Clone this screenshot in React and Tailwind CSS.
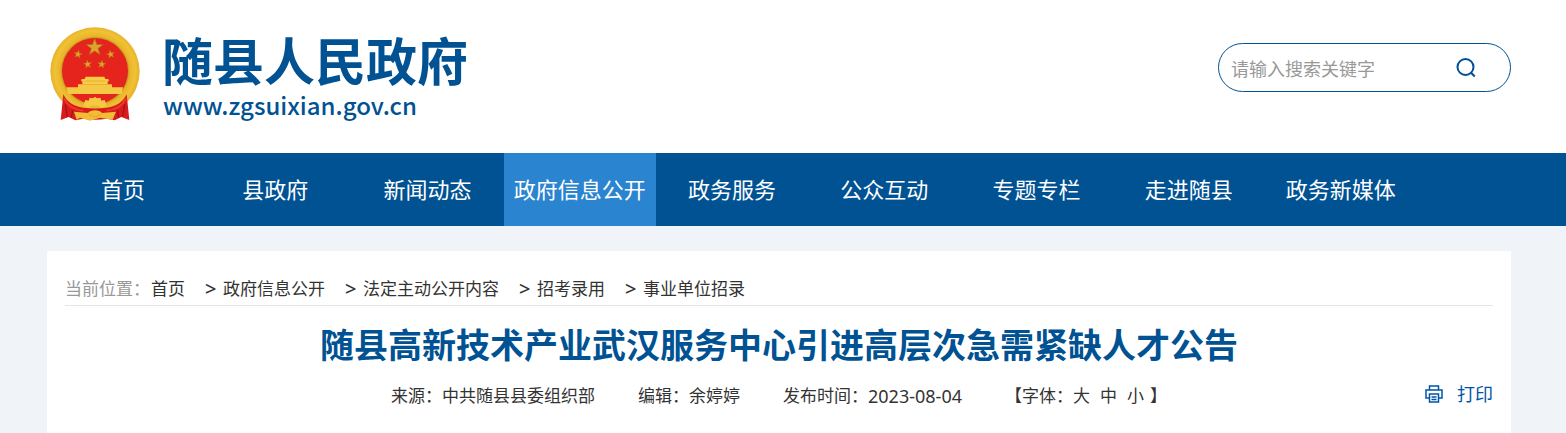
import { useState } from 'react';

const navItems = [
  { label: '首页' },
  { label: '县政府' },
  { label: '新闻动态' },
  { label: '政府信息公开', active: true },
  { label: '政务服务' },
  { label: '公众互动' },
  { label: '专题专栏' },
  { label: '走进随县' },
  { label: '政务新媒体' },
];

const crumbs = ['首页', '政府信息公开', '法定主动公开内容', '招考录用', '事业单位招录'];

const STAR = '0,-10 2.4,-3.2 9.5,-3.1 3.8,1.2 5.9,8.1 0,4 -5.9,8.1 -3.8,1.2 -9.5,-3.1 -2.4,-3.2';

const Star = ({ x, y, scale, rotate = 0 }) => (
  <polygon
    points={STAR}
    transform={`translate(${x} ${y}) rotate(${rotate}) scale(${scale})`}
    fill="#dfa22a"
    stroke="#b8651c"
    strokeWidth="0.8"
  />
);

const Emblem = () => (
  <svg viewBox="30 36 270 285" className="h-[95px] w-[90px] shrink-0" aria-hidden="true">
    <defs>
      <radialGradient id="rim" gradientUnits="userSpaceOnUse" cx="165" cy="168" r="134">
        <stop offset="0.72" stopColor="#b8831a" />
        <stop offset="0.78" stopColor="#e9b52b" />
        <stop offset="0.9" stopColor="#f0c234" />
        <stop offset="1" stopColor="#e8b02a" />
      </radialGradient>
    </defs>
    <ellipse cx="165" cy="169" rx="134" ry="132" fill="url(#rim)" />
    <circle cx="165" cy="168" r="99" fill="#e5251d" />
    <Star x={164} y={97} scale={2.7} />
    <Star x={114} y={118} scale={1.3} rotate={12} />
    <Star x={212} y={118} scale={1.3} rotate={-12} />
    <Star x={143} y={148} scale={1.3} rotate={-8} />
    <Star x={185} y={148} scale={1.3} rotate={8} />
    {/* gate tower */}
    <path d="M137 185h56l3 7h9l2 7h-4v9h-76v-9h-4l2-7h9z" fill="#f6cb45" />
    <path d="M135 198h60" stroke="#e3a52b" strokeWidth="2" />
    <path d="M114 208h102v9h33l-4 20H85l-6-20h35z" fill="#f6c945" />
    {/* ribbons */}
    <path d="M70 238c10 22 30 36 60 40 24 3 46 3 70 0 30-4 50-18 60-40l8 77-24-9-20 10-24-5c-23 4-47 4-70 0l-24 5-20-10-24 9z" fill="#d81c1c" />
    <path d="M72 250c10 22 30 34 58 37M258 250c-10 22-30 34-58 37" fill="none" stroke="#ee3b2a" strokeWidth="5" />
    <path d="M76 268l6 36M254 268l-6 36M98 286l-4 22M232 286l4 22" fill="none" stroke="#a81018" strokeWidth="4" />
    {/* gear */}
    <path d="M130 272l6-17 10 2 3-9 10 2 6-5 6 5 10-2 3 9 10-2 6 17-15 7-10-7h-20l-10 7z" fill="#f6c945" />
    <path d="M102 290l42 4c7-11 35-11 42 0l42-4-10 24-38-6-30 9-30-9-10 6z" fill="#f2bd36" />
    <path d="M146 298l19 8 19-8" fill="none" stroke="#dc9a24" strokeWidth="2" />
  </svg>
);

const SearchIcon = () => (
  <svg viewBox="0 0 20 20" className="h-5 w-5" fill="none" stroke="#004f92" strokeWidth="2" aria-hidden="true">
    <circle cx="9.5" cy="9" r="8" />
    <path d="M14.8 14.5l4 4" />
  </svg>
);

const PrinterIcon = () => (
  <svg viewBox="0 0 18 18" className="h-[18px] w-[18px]" fill="none" stroke="#0054a6" strokeWidth="1.5" aria-hidden="true">
    <path d="M4.5 5V1h9v4M4.5 13H1V5h16v8h-3.5M4.5 9h9v8h-9z" />
    <path d="M6.5 12h5M6.5 14.5h5" />
  </svg>
);

const App = () => {
  const [keyword, setKeyword] = useState('');

  return (
    <div className="flex min-h-screen flex-col bg-[#f0f4f8] font-['Noto_Sans','Noto_Sans_CJK_SC',sans-serif] text-[#333333]">
      <header className="flex h-[153px] items-start justify-between bg-white pr-[55px] pl-[50px]">
        <a href="#" className="flex items-start gap-[22px] pt-[27px] font-['Noto_Sans_CJK_SC',sans-serif] text-[#005293]">
          <Emblem />
          <span className="flex flex-col">
            <span className="text-[51px] leading-[64px] font-bold">随县人民政府</span>
            <span className="pl-px text-[24px] leading-[28px] font-medium">www.zgsuixian.gov.cn</span>
          </span>
        </a>
        <form
          onSubmit={(e) => e.preventDefault()}
          className="mt-[43px] flex h-[49px] w-[293px] items-center rounded-full border border-[#005293] pr-[34px] pl-3"
        >
          <input
            type="text"
            aria-label="搜索"
            value={keyword}
            onChange={(e) => setKeyword(e.target.value)}
            placeholder="请输入搜索关键字"
            className="min-w-0 flex-1 pt-1 text-[18px] outline-none placeholder:text-[#999999]"
          />
          <button type="submit" aria-label="搜索">
            <SearchIcon />
          </button>
        </form>
      </header>

      <nav className="bg-[#005293] pr-[55px] pl-[47px]">
        <div className="flex max-w-[1370px]">
          {navItems.map((item) => (
            <a
              key={item.label}
              href="#"
              className={`flex-1 text-center text-[22px] leading-[73px] whitespace-nowrap text-white ${item.active ? 'bg-[#2a84d0]' : ''}`}
            >
              {item.label}
            </a>
          ))}
        </div>
      </nav>

      <main className="mt-[25px] mr-[55px] ml-[47px] flex-1 bg-white px-[18px] pt-[22px]">
        <div className="flex h-[33px] items-center border-b border-[#e5e5e5] text-[17px]">
          <span className="mr-px text-[#999999]">当前位置：</span>
          {crumbs.map((crumb, i) => (
            <span key={crumb} className="flex items-center">
              {i > 0 && (
                <span className="mr-[7px] ml-5 w-[11px] text-center text-[20px] leading-[24px] font-medium">&gt;</span>
              )}
              <a href="#">{crumb}</a>
            </span>
          ))}
        </div>

        <h1 className="mt-[14px] text-center text-[34px] leading-[50px] font-bold text-[#005293]">
          随县高新技术产业武汉服务中心引进高层次急需紧缺人才公告
        </h1>

        <div className="mt-3 grid grid-cols-[1fr_auto_1fr] items-start text-[17px] leading-[28px]">
          <div className="col-start-2 flex gap-[43px]">
            <span>来源：中共随县县委组织部</span>
            <span>编辑：余婷婷</span>
            <span className="flex">
              发布时间：<time className="text-[18px]">2023-08-04</time>
            </span>
            <span className="flex">
              【字体：
              <span className="flex gap-[10px]">
                <button type="button">大</button>
                <button type="button">中</button>
                <button type="button">小</button>
              </span>
              <span className="ml-1.5">】</span>
            </span>
          </div>
          <button
            type="button"
            className="flex items-center gap-[14px] justify-self-end text-[18px] leading-[24px] text-[#0054a6]"
          >
            <PrinterIcon />
            打印
          </button>
        </div>
      </main>
    </div>
  );
};

export default App;
